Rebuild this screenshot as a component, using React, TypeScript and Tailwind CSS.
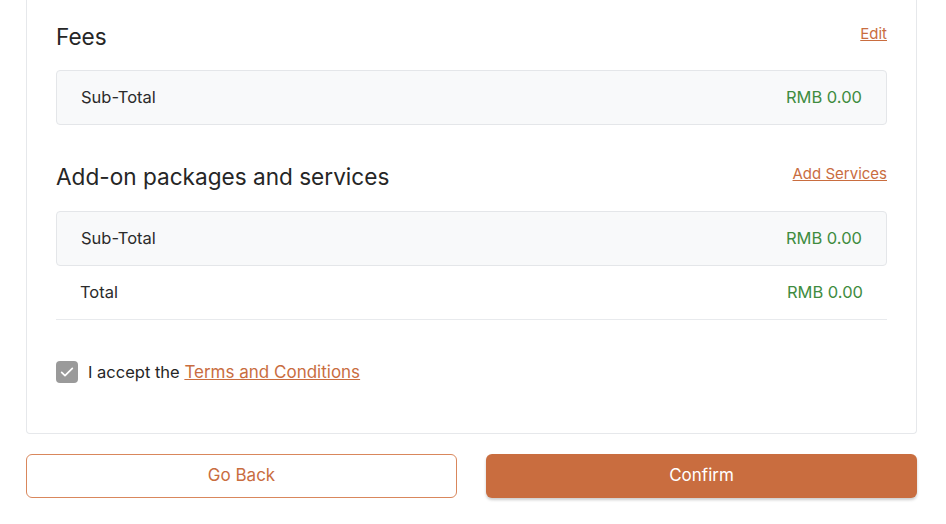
const orange = 'text-[#c96d3f]';

const Row = ({ label, value, shaded }: { label: string; value: string; shaded?: boolean }) => (
  <div
    className={
      shaded
        ? 'flex h-[55px] items-center justify-between rounded-[4px] border border-[#e4e6e9] bg-[#f8f9fa] pl-[24px] pr-[24px]'
        : 'flex h-[54px] items-center justify-between border-b border-[#e8eaed] pl-[24px] pr-[24px]'
    }
  >
    <span className="text-[16.5px] text-[#2b2b2b]">{label}</span>
    <span className="text-[16.5px] text-[#3f8c3f]">{value}</span>
  </div>
);

export default function App() {
  return (
    <div className="min-h-screen bg-white pl-[26px] font-['Inter',sans-serif]">
      <div className="w-[891px]">
        <div className="rounded-b-[4px] border border-t-0 border-[#e6e8eb] px-[29px] pt-[23px] pb-[50px]">
          <div className="flex items-center justify-between">
            <h2 className="text-[22.6px] leading-[28px] text-[#262626]">Fees</h2>
            <a href="#" className={`mb-[6px] text-[15px] underline ${orange}`}>Edit</a>
          </div>
          <div className="mt-[18px]">
            <Row label="Sub-Total" value="RMB 0.00" shaded />
          </div>

          <div className="mt-[38px] flex items-center justify-between">
            <h2 className="text-[22.6px] leading-[28px] text-[#262626]">Add-on packages and services</h2>
            <a href="#" className={`mb-[6px] text-[15px] underline ${orange}`}>Add Services</a>
          </div>
          <div className="mt-[20px]">
            <Row label="Sub-Total" value="RMB 0.00" shaded />
            <Row label="Total" value="RMB 0.00" />
          </div>

          <label className="mt-[41px] flex items-center gap-[10px]">
            <span className="flex h-[22px] w-[22px] items-center justify-center rounded-[4px] bg-[#9a9a9a]">
              <svg width="16" height="16" viewBox="0 0 24 24" fill="none" stroke="white" strokeWidth="2.6" strokeLinecap="round" strokeLinejoin="round">
                <path d="M4 12.5l5 5L20 6.5" />
              </svg>
            </span>
            <span className="text-[16.5px] leading-[22px] text-[#262626]">
              I accept the{' '}
              <a href="#" className={`text-[17px] underline ${orange}`}>Terms and Conditions</a>
            </span>
          </label>
        </div>

        <div className="mt-[20px] grid grid-cols-2 gap-[29px]">
          <button className={`h-[44px] rounded-[6px] border border-[#d9875c] bg-white text-[17px] ${orange}`}>
            Go Back
          </button>
          <button className="h-[44px] rounded-[6px] bg-[#c96d3f] text-[17px] text-white shadow-[0_2px_3px_rgba(0,0,0,0.2)]">
            Confirm
          </button>
        </div>
      </div>
    </div>
  );
}
